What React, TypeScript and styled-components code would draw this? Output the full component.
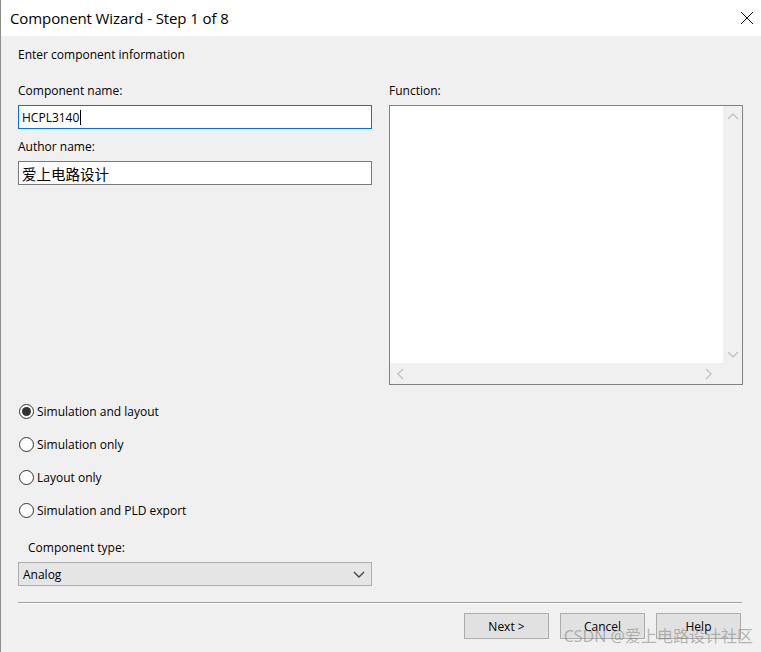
import React from "react";
import styled, { createGlobalStyle } from "styled-components";

const GlobalStyle = createGlobalStyle`
  html, body {
    margin: 0;
    padding: 0;
    background: #f0f0f0;
  }
  * {
    box-sizing: border-box;
  }
`;

const Window = styled.div`
  position: relative;
  display: flex;
  flex-direction: column;
  width: 761px;
  height: 652px;
  overflow: hidden;
  border-left: 1px solid #8c8c8c;
  font-family: "Open Sans", "Noto Sans", "Noto Sans CJK SC", sans-serif;
  font-size: 12px;
  color: #000;
`;

const TitleBar = styled.div`
  display: flex;
  flex-direction: row;
  align-items: center;
  justify-content: space-between;
  height: 36px;
  padding-left: 9px;
  padding-right: 7px;
  background: #ffffff;
`;

const Title = styled.div`
  font-size: 15px;
  letter-spacing: -0.1px;
`;

const CloseBtn = styled.div`
  display: flex;
  align-items: center;
  justify-content: center;
  width: 14px;
  height: 14px;
`;

const Body = styled.div`
  flex: 1;
  display: flex;
  flex-direction: column;
  padding: 11px 19px 0 17px;
  background: #f0f0f0;
`;

const Intro = styled.div`
  line-height: 16px;
`;

const Columns = styled.div`
  display: grid;
  grid-template-columns: 354px 354px;
  column-gap: 17px;
  margin-top: 20px;
`;

const Column = styled.div`
  display: flex;
  flex-direction: column;
`;

const Label = styled.div<{ $indent?: number }>`
  line-height: 16px;
  margin-left: ${(p) => p.$indent ?? 0}px;
`;

const TextBox = styled.div<{ $focused?: boolean; $cjk?: boolean }>`
  display: flex;
  align-items: center;
  height: 24px;
  margin-top: 6px;
  margin-bottom: 10px;
  padding-left: 3px;
  background: #ffffff;
  border: 1px solid ${(p) => (p.$focused ? "#0078d7" : "#7a7a7a")};
  font-size: ${(p) => (p.$cjk ? "14.5px" : "12px")};
  font-family: ${(p) =>
    p.$cjk
      ? `"Noto Sans CJK SC", "Noto Sans", sans-serif`
      : `"Open Sans", "Noto Sans", sans-serif`};
`;

const Caret = styled.span`
  display: inline-block;
  width: 1px;
  height: 15px;
  margin-left: 1px;
  background: #000;
`;

const FunctionBox = styled.div`
  display: grid;
  grid-template-columns: 1fr 19px;
  grid-template-rows: 1fr 21px;
  height: 280px;
  margin-top: 6px;
  border: 1px solid #828282;
  background: #f0f0f0;
`;

const TextArea = styled.div`
  background: #ffffff;
`;

const ScrollV = styled.div`
  display: flex;
  flex-direction: column;
  justify-content: space-between;
  align-items: center;
  padding: 6px 0 4px;
  background: #f0f0f0;
`;

const ScrollH = styled.div`
  display: flex;
  flex-direction: row;
  justify-content: space-between;
  align-items: center;
  padding: 0 10px 0 6px;
  background: #f0f0f0;
`;

const Corner = styled.div`
  background: #f0f0f0;
`;

const RadioGroup = styled.div`
  display: flex;
  flex-direction: column;
  gap: 15px;
  margin-top: 17px;
`;

const RadioRow = styled.div`
  display: flex;
  flex-direction: row;
  align-items: center;
  height: 18px;
  gap: 3px;
`;

const RadioCircle = styled.div<{ $checked?: boolean }>`
  display: flex;
  align-items: center;
  justify-content: center;
  width: 15px;
  height: 15px;
  margin-left: 1px;
  border-radius: 50%;
  border: 1px solid #333333;
  background: #ffffff;

  &::after {
    content: "";
    display: ${(p) => (p.$checked ? "block" : "none")};
    width: 9px;
    height: 9px;
    border-radius: 50%;
    background: #333333;
  }
`;

const TypeSection = styled.div`
  display: flex;
  flex-direction: column;
  width: 354px;
  margin-top: 21px;
`;

const Select = styled.div`
  display: flex;
  align-items: center;
  justify-content: space-between;
  height: 24px;
  margin-top: 6px;
  padding: 0 6px 0 4px;
  background: #e5e5e5;
  border: 1px solid #adadad;
`;

const Separator = styled.div`
  margin-top: 16px;
  height: 2px;
  border-top: 1px solid #a0a0a0;
  border-bottom: 1px solid #ffffff;
`;

const ButtonRow = styled.div`
  display: flex;
  flex-direction: row;
  justify-content: flex-end;
  gap: 11px;
  margin-top: 9px;
  padding-right: 1px;
`;

const Button = styled.div`
  display: flex;
  align-items: center;
  justify-content: center;
  width: 85px;
  height: 26px;
  background: #e1e1e1;
  border: 1px solid #adadad;
`;

const Watermark = styled.div`
  position: absolute;
  right: 8px;
  bottom: 5px;
  font-family: "Noto Sans", "Noto Sans CJK SC", sans-serif;
  font-size: 16px;
  color: rgba(120, 120, 120, 0.5);
  pointer-events: none;
  white-space: nowrap;
`;

const Chevron = ({ dir, color = "#c2c2c2" }: { dir: "up" | "down" | "left" | "right"; color?: string }) => {
  const paths: Record<string, string> = {
    up: "M1 7 L6 2 L11 7",
    down: "M1 2 L6 7 L11 2",
    left: "M7 1 L2 6 L7 11",
    right: "M2 1 L7 6 L2 11",
  };
  const horizontal = dir === "up" || dir === "down";
  return (
    <svg
      width={horizontal ? 12 : 9}
      height={horizontal ? 9 : 12}
      viewBox={horizontal ? "0 0 12 9" : "0 0 9 12"}
    >
      <path d={paths[dir]} fill="none" stroke={color} strokeWidth="1.4" />
    </svg>
  );
};

const options = [
  { label: "Simulation and layout", checked: true },
  { label: "Simulation only", checked: false },
  { label: "Layout only", checked: false },
  { label: "Simulation and PLD export", checked: false },
];

export default function App() {
  return (
    <>
      <GlobalStyle />
      <Window>
        <TitleBar>
          <Title>Component Wizard - Step 1 of 8</Title>
          <CloseBtn>
            <svg width="14" height="14" viewBox="0 0 14 14">
              <path d="M1 1 L13 13 M13 1 L1 13" stroke="#111" strokeWidth="1" />
            </svg>
          </CloseBtn>
        </TitleBar>
        <Body>
          <Intro>Enter component information</Intro>
          <Columns>
            <Column>
              <Label>Component name:</Label>
              <TextBox $focused>
                HCPL3140
                <Caret />
              </TextBox>
              <Label>Author name:</Label>
              <TextBox $cjk>爱上电路设计</TextBox>
            </Column>
            <Column>
              <Label>Function:</Label>
              <FunctionBox>
                <TextArea />
                <ScrollV>
                  <Chevron dir="up" />
                  <Chevron dir="down" />
                </ScrollV>
                <ScrollH>
                  <Chevron dir="left" />
                  <Chevron dir="right" />
                </ScrollH>
                <Corner />
              </FunctionBox>
            </Column>
          </Columns>
          <RadioGroup>
            {options.map((o) => (
              <RadioRow key={o.label}>
                <RadioCircle $checked={o.checked} />
                <span>{o.label}</span>
              </RadioRow>
            ))}
          </RadioGroup>
          <TypeSection>
            <Label $indent={10}>Component type:</Label>
            <Select>
              <span>Analog</span>
              <Chevron dir="down" color="#444" />
            </Select>
          </TypeSection>
          <Separator />
          <ButtonRow>
            <Button>Next &gt;</Button>
            <Button>Cancel</Button>
            <Button>Help</Button>
          </ButtonRow>
        </Body>
        <Watermark>CSDN @爱上电路设计社区</Watermark>
      </Window>
    </>
  );
}
